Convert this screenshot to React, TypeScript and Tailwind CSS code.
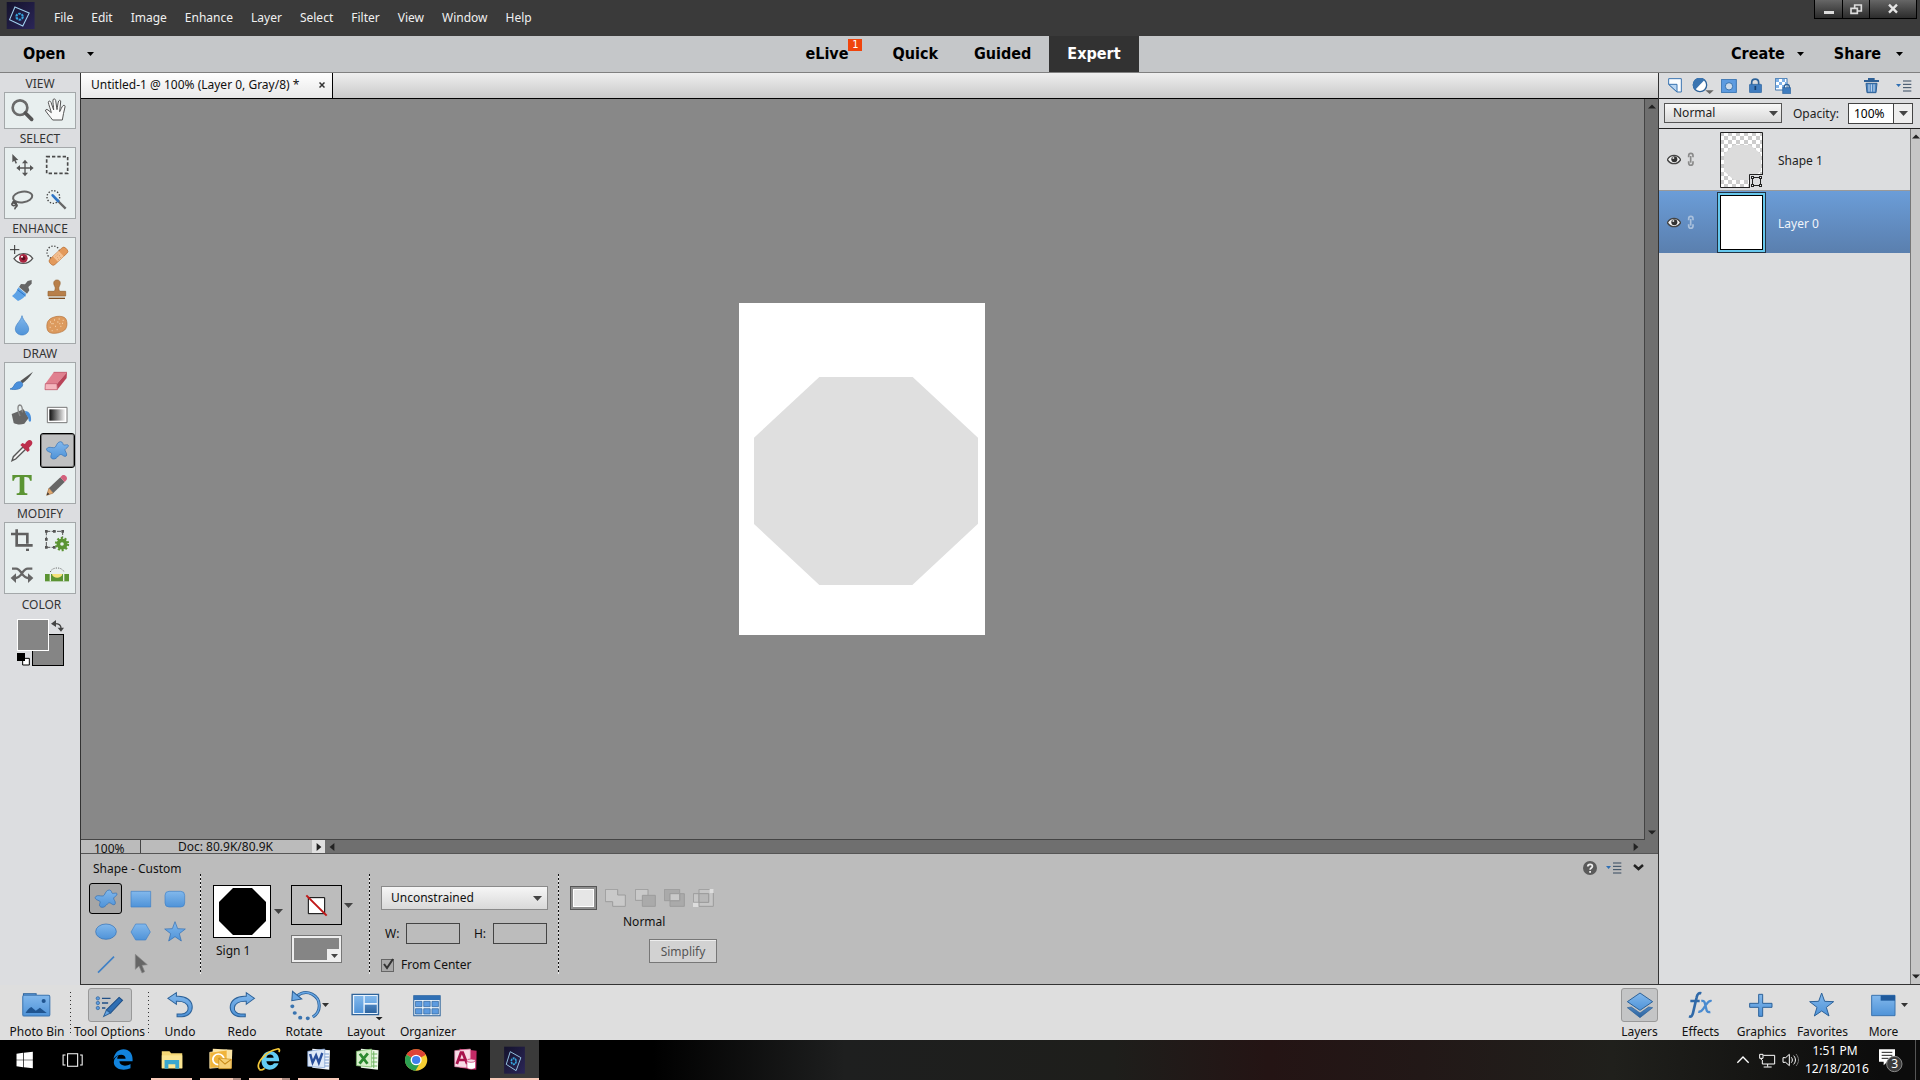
import React, { ReactNode } from "react";

type Box = [number, number, number, number];

/* Icons are drawn on a grid of three units per pixel; `w` overrides the drawn width. */
function Icon({ box, children, w, className = "" }: { box: Box; children: ReactNode; w?: number; className?: string }) {
  return (
    <svg
      viewBox={box.join(" ")}
      width={w ?? box[2] / 3}
      height={box[3] / 3}
      preserveAspectRatio="none"
      className={`block shrink-0 ${className}`}
      aria-hidden="true"
    >
      {children}
    </svg>
  );
}

function Caret({ className = "text-[#444]" }: { className?: string }) {
  return (
    <svg viewBox="0 0 9 5" className={`block h-[5px] w-[9px] shrink-0 ${className}`} aria-hidden="true">
      <path d="M0 0h9L4.500 5z" fill="currentColor" />
    </svg>
  );
}

function SmallCaret({ className = "text-black" }: { className?: string }) {
  return (
    <svg viewBox="0 0 7 4" className={`block h-1 w-[7px] shrink-0 ${className}`} aria-hidden="true">
      <path d="M0 0h7L3.500 4z" fill="currentColor" />
    </svg>
  );
}

function Gradients() {
  return (
    <svg className="absolute h-0 w-0" aria-hidden="true">
      <defs>
        <linearGradient id="blue" x1="0" y1="0" x2="0" y2="1">
          <stop offset="0" stopColor="#82b8ec" />
          <stop offset="1" stopColor="#4f93d8" />
        </linearGradient>
        <linearGradient id="navy" x1="0" y1="0" x2="0" y2="1">
          <stop offset="0" stopColor="#4a83bf" />
          <stop offset="1" stopColor="#2c639f" />
        </linearGradient>
        <linearGradient id="fade" x1="0" y1="0" x2="1" y2="0">
          <stop offset="0" stopColor="#111" />
          <stop offset="1" stopColor="#f4f4f4" />
        </linearGradient>
        <linearGradient id="logo" x1="0" y1="0" x2="1" y2="1">
          <stop offset="0" stopColor="#14122c" />
          <stop offset="1" stopColor="#2b2658" />
        </linearGradient>
      </defs>
    </svg>
  );
}

function Logo() {
  return (
    <>
      <rect x="20" y="9" width="78" height="81" fill="url(#logo)" />
      <path d="M43 24 83 42 65 81 28 62z" fill="none" stroke="#9fd0ee" strokeWidth="3" />
      <circle cx="56" cy="53" r="9" fill="none" stroke="#36a5de" strokeWidth="6" strokeDasharray="7 2.400" />
    </>
  );
}

const splat =
  "M168 318c3-6 6-13 14-13c8 1 6 9 9 10c5 1 12-3 14 1c2 6-8 8-10 13c-1 5 6 9 5 16c-1 6-7 5-12 1c-5-4-8-3-12 1c-5 5-9 11-16 10c-8-1-9-7-6-13c2-5-1-6-6-8c-8-3-11-8-6-12c5-4 12-1 18-1c4 0 6-1 8-5z";

const menus = ["File", "Edit", "Image", "Enhance", "Layer", "Select", "Filter", "View", "Window", "Help"];

function MenuBar() {
  return (
    <header className="flex h-9 items-start justify-between bg-[#3a3a3a] text-[#f0f0f0]">
      <div className="flex h-9 items-center">
        <Icon box={[18, 9, 84, 84]} w={30} className="ml-[6px] -mt-1">
          <Logo />
        </Icon>
        <nav className="ml-[18px] flex gap-[18px]">
          {menus.map((m) => (
            <button key={m} className="leading-4">
              {m}
            </button>
          ))}
        </nav>
      </div>
      <div className="mr-[3px] flex h-[19px] border border-t-0 border-black bg-linear-to-b from-[#666] to-[#2c2c2c]">
        <button aria-label="Minimize" className="grid w-7 place-items-center border-r border-black">
          <Icon box={[600, 3, 48, 48]}>
            <rect x="609" y="33" width="30" height="9" fill="#ddd" />
          </Icon>
        </button>
        <button aria-label="Restore" className="grid w-[27px] place-items-center border-r border-black">
          <Icon box={[684, 6, 48, 48]}>
            <path d="M704 18h20v18h-20z" fill="none" stroke="#ddd" strokeWidth="5" />
            <path d="M693 28h19v15h-19z" fill="#444" stroke="#ddd" strokeWidth="5" />
          </Icon>
        </button>
        <button aria-label="Close" className="grid w-[46px] place-items-center">
          <Icon box={[795, 6, 48, 48]}>
            <path d="m807 17 24 24m0-24-24 24" stroke="#e4e4e4" strokeWidth="7" />
          </Icon>
        </button>
      </div>
    </header>
  );
}

function ModeBar() {
  return (
    <div className="grid h-[37px] grid-cols-[1fr_auto_1fr] border-b border-[#808080] bg-[#c5c7c9] font-['DejaVu_Sans_Condensed','Noto_Sans',sans-serif] text-[16px] font-bold text-black">
      <button className="flex items-center justify-self-start pl-[23px]">
        Open <SmallCaret className="ml-[21px] text-black" />
      </button>
      <nav className="flex pl-[6px]">
        <button className="relative pr-[26px] pl-[18px]">
          eLive
          <span className="absolute top-[3px] right-[12px] h-3 w-[14px] bg-[#f0440c] text-center text-[11px] leading-3 font-normal text-white">
            1
          </span>
        </button>
        <button className="px-[18px]">Quick</button>
        <button className="px-[18px]">Guided</button>
        <button className="bg-[#323232] px-[18px] text-white">Expert</button>
      </nav>
      <div className="flex items-center justify-self-end pr-[17px]">
        <button className="flex items-center">
          Create <SmallCaret className="ml-3 text-black" />
        </button>
        <button className="ml-[30px] flex items-center">
          Share <SmallCaret className="ml-[15px] text-black" />
        </button>
      </div>
    </div>
  );
}

type Tool = { name: string; box: Box; art: ReactNode; active?: boolean };

const groups: { title: string; tools: Tool[] }[] = [
  {
    title: "VIEW",
    tools: [
      {
        name: "Zoom",
        box: [15, 69, 105, 105],
        art: (
          <>
            <circle cx="60" cy="113" r="22" fill="#e6eeee" stroke="#6a6a6a" strokeWidth="8" />
            <path d="m76 129 19 19" stroke="#555" strokeWidth="11" strokeLinecap="round" />
          </>
        ),
      },
      {
        name: "Hand",
        box: [120, 69, 105, 105],
        art: (
          <path
            d="M158 150c-8-10-16-20-21-27c-2-5 3-6 7-3l10 8c-2-10-8-23-9-31c0-5 6-5 8 0l8 23c0-10-3-22-2-30c1-5 7-4 8 1l4 28c2-9 2-19 5-26c3-4 7-2 6 3l-3 29c4-7 6-14 10-18c4-3 7 0 6 4c-4 12-5 26-8 39z"
            fill="#fafafa"
            stroke="#555"
            strokeWidth="3"
            strokeLinejoin="round"
          />
        ),
      },
    ],
  },
  {
    title: "SELECT",
    tools: [
      {
        name: "Move",
        box: [15, 234, 105, 105],
        art: (
          <>
            <path d="M37 252v25l6-5 4 9 4-2-4-8 8-1z" fill="#555" />
            <path d="M75 276v36M57 294h36" stroke="#555" strokeWidth="4" />
            <path d="m75 269 9 11H66zM75 319l-9-11h18zM49 294l11-9v18zM101 294l-11 9v-18z" fill="#555" />
          </>
        ),
      },
      {
        name: "Marquee",
        box: [120, 234, 105, 105],
        art: (
          <rect x="140" y="260" width="63" height="50" fill="none" stroke="#4a4a4a" strokeWidth="5" strokeDasharray="10 6" />
        ),
      },
      {
        name: "Lasso",
        box: [15, 339, 105, 105],
        art: (
          <>
            <ellipse cx="68" cy="381" rx="29" ry="16" fill="none" stroke="#666" strokeWidth="6" transform="rotate(-8 68 381)" />
            <path d="M37 398c5-6 14-1 11 5s-14 5-12-2c3-6 20 2 14 8-5 5-6 3-5 9" fill="none" stroke="#555" strokeWidth="5" />
          </>
        ),
      },
      {
        name: "Quick Selection",
        box: [120, 339, 105, 105],
        art: (
          <>
            <circle cx="160" cy="381" r="19" fill="none" stroke="#444" strokeWidth="4" strokeDasharray="4 5" />
            <path d="m174 393 23 23" stroke="#666" strokeWidth="7" />
            <path d="m158 376 16 17" stroke="#2f74c4" strokeWidth="8" strokeLinecap="round" />
          </>
        ),
      },
    ],
  },
  {
    title: "ENHANCE",
    tools: [
      {
        name: "Red Eye",
        box: [15, 504, 105, 105],
        art: (
          <>
            <path d="M30 539h28M44 525v27" stroke="#333" strokeWidth="3" />
            <path d="M42 566c14-20 42-20 56-1c-14 20-42 20-56 1z" fill="#fafafa" stroke="#555" strokeWidth="4" />
            <circle cx="70" cy="565" r="13" fill="#a8243f" />
            <circle cx="70" cy="565" r="6" fill="#5d0e20" />
            <circle cx="66" cy="560" r="3" fill="#fff" />
          </>
        ),
      },
      {
        name: "Spot Healing",
        box: [120, 504, 105, 105],
        art: (
          <>
            <circle cx="160" cy="547" r="19" fill="none" stroke="#444" strokeWidth="4" strokeDasharray="4 5" />
            <g transform="rotate(-43 175 559)">
              <rect x="143" y="548" width="65" height="22" rx="8" fill="#e39a5c" stroke="#b86f35" strokeWidth="2" />
              <rect x="163" y="548" width="24" height="22" fill="#f4c091" />
              <path d="M169 554h2m6 0h2m-10 6h2m6 0h2m-10 6h2m6 0h2" stroke="#a86a38" strokeWidth="2" />
            </g>
          </>
        ),
      },
      {
        name: "Smart Brush",
        box: [15, 609, 105, 105],
        art: (
          <>
            <path d="m95 630-12 3-8 10-12-1-6 9 24 20 7-10-3-10 10-10z" fill="#666" />
            <path d="m55 652 24 20c-6 11-14 17-25 21l-18-15c9-6 14-13 19-26z" fill="#5da2e6" />
            <path d="m52 659 25 19" stroke="#2f74c4" strokeWidth="3" />
          </>
        ),
      },
      {
        name: "Clone Stamp",
        box: [120, 609, 105, 105],
        art: (
          <>
            <path
              d="M171 630c12 0 11 13 7 18c-3 6-2 13 2 16h17v14h-53v-14h18c4-3 5-10 2-16c-4-5-5-18 7-18z"
              fill="#b87f49"
              stroke="#94602f"
              strokeWidth="2"
            />
            <path d="M146 685h49" stroke="#7d4e22" strokeWidth="4" />
          </>
        ),
      },
      {
        name: "Blur",
        box: [15, 714, 105, 105],
        art: (
          <path
            d="M66 737c4 17 20 26 20 40c0 11-9 18-20 18s-20-7-20-18c0-14 16-23 20-40z"
            fill="url(#blue)"
            stroke="#3f81c6"
            strokeWidth="2"
          />
        ),
      },
      {
        name: "Sponge",
        box: [120, 714, 105, 105],
        art: (
          <>
            <path
              d="M145 752c10-14 43-18 52-6c6 10 5 27-3 34c-9 8-34 14-46 7c-10-6-9-28-3-35z"
              fill="#dc9a5e"
              stroke="#b3713a"
              strokeWidth="2"
            />
            <path
              d="M150 756h3m9-6h3m11-3h3m9 4h3m-33 10h3m11-5h3m11 4h3m-40 12h3m13-3h3m13 0h3m-29 13h3m12-3h3m-19-18h3m21 0h3"
              stroke="#f3cda4"
              strokeWidth="4"
            />
          </>
        ),
      },
    ],
  },
  {
    title: "DRAW",
    tools: [
      {
        name: "Brush",
        box: [15, 69, 105, 105],
        art: (
          <>
            <path d="m99 95-38 28 7 7c10-8 24-22 31-35z" fill="#555" />
            <path
              d="M58 125c8 0 12 6 9 13c-7 12-25 12-37 9c10-3 10-8 14-14c4-6 9-8 14-8z"
              fill="#4a90dc"
              stroke="#2d6cb4"
              strokeWidth="2"
            />
          </>
        ),
      },
      {
        name: "Eraser",
        box: [120, 69, 105, 105],
        art: (
          <>
            <path d="m161 97 40 0-30 34-35 0z" fill="#e0808f" />
            <path d="m201 97-1 17-28 35-1-18z" fill="#b94459" />
            <path d="M136 131h35l1 18h-37z" fill="#f4b6be" stroke="#b94459" strokeWidth="2" />
            <path d="m161 97 40 0" stroke="#b94459" strokeWidth="2" />
          </>
        ),
      },
      {
        name: "Paint Bucket",
        box: [15, 174, 105, 105],
        art: (
          <>
            <path d="m35 222 36-14 15 26-13 17c-12 4-22 3-32-2z" fill="#666" />
            <path d="M60 228c-8-17-8-32-1-33c6 0 9 8 8 22" fill="none" stroke="#888" strokeWidth="4" />
            <path d="M75 213c14 0 20 15 18 29c-1 5-7 4-7-1c0-7-3-13-8-17z" fill="#4a90dc" />
          </>
        ),
      },
      {
        name: "Gradient",
        box: [120, 174, 105, 105],
        art: (
          <>
            <path d="M142 202h59v46h-59z" fill="#fff" stroke="#777" strokeWidth="3" />
            <path d="M148 208h47v34h-47z" fill="url(#fade)" />
          </>
        ),
      },
      {
        name: "Color Picker",
        box: [15, 279, 105, 105],
        art: (
          <>
            <path d="m69 321-29 29-4 12 11-5 30-29z" fill="#f2f2f2" stroke="#555" strokeWidth="4" />
            <path d="m61 315 6-6 8 3c4-9 14-16 20-9c6 8-2 15-8 20l2 8-6 5z" fill="#bd2f4c" />
          </>
        ),
      },
      {
        name: "Custom Shape",
        box: [120, 279, 105, 105],
        active: true,
        art: <path d={splat} fill="url(#blue)" stroke="#2d6cb4" strokeWidth="2" />,
      },
      {
        name: "Type",
        box: [15, 384, 105, 105],
        art: (
          <path
            d="M37 405h58v17h-5c-1-8-5-11-14-11h-3v43c0 5 3 6 9 6v5H50v-5c6 0 9-1 9-6v-43h-3c-9 0-13 3-14 11h-5z"
            fill="#5b9433"
          />
        ),
      },
      {
        name: "Pencil",
        box: [120, 384, 105, 105],
        art: (
          <>
            <path d="m140 466 7-22 13 15z" fill="#e0a870" stroke="#a5703c" strokeWidth="2" />
            <path d="m147 444 34-32 13 14-34 33z" fill="#666" />
            <path d="m181 412 6-6c8-4 17 6 13 13l-6 7z" fill="#d4607c" />
            <path d="m140 466 3-9 5 6z" fill="#333" />
          </>
        ),
      },
    ],
  },
  {
    title: "MODIFY",
    tools: [
      {
        name: "Crop",
        box: [15, 549, 105, 105],
        art: (
          <>
            <path d="M33 582h49v29M50 568v48h48" fill="none" stroke="#606060" strokeWidth="8" />
            <path d="M78 626h9v7h-9z" fill="#606060" />
          </>
        ),
      },
      {
        name: "Recompose",
        box: [120, 549, 105, 105],
        art: (
          <>
            <path d="M139 574h49v20M139 574v48h22" fill="none" stroke="#555" strokeWidth="3" strokeDasharray="12 4" />
            <path d="M135 570h8v8h-8zm24 0h8v8h-8zm25 0h8v8h-8zm-49 24h8v8h-8zm0 24h8v8h-8zm24 0h8v8h-8z" fill="#555" />
            <circle cx="186" cy="612" r="18" fill="none" stroke="#5b9433" strokeWidth="7" strokeDasharray="6 5.300" />
            <circle cx="186" cy="612" r="11" fill="none" stroke="#5b9433" strokeWidth="11" />
          </>
        ),
      },
      {
        name: "Content-Aware Move",
        box: [15, 654, 105, 105],
        art: (
          <>
            <path d="M36 686h12c16 0 18 28 36 28h5M40 714h7c18 0 20-28 36-28h14" fill="none" stroke="#666" strokeWidth="7" />
            <path d="m84 700 16 14-16 15zM48 700l-16 14 16 15z" fill="#666" />
          </>
        ),
      },
      {
        name: "Straighten",
        box: [120, 654, 105, 105],
        art: (
          <>
            <path d="M151 696c5-16 36-16 41 0" fill="none" stroke="#555" strokeWidth="3" strokeDasharray="3 4" />
            <path d="M135 702h72v22h-72z" fill="#5b9433" />
            <path d="M151 702v22m40-22v22" stroke="#e8f0e8" strokeWidth="4" />
            <path d="M156 702h31c-2 15-29 15-31 0z" fill="#f5e27a" />
          </>
        ),
      },
    ],
  },
];

function Toolbox() {
  return (
    <aside className="flex w-[81px] shrink-0 flex-col border-r border-[#333] bg-[#dcdde0] pt-px text-[#333]">
      {groups.map((g) => (
        <section key={g.title} className="flex flex-col">
          <h2 className="h-[18px] text-center leading-5">{g.title}</h2>
          <div className="ml-1 grid w-18 grid-cols-2 border border-[#a4a8aa] bg-[#e8efef]">
            {g.tools.map((t) => (
              <button
                key={t.name}
                aria-label={t.name}
                className={
                  t.active
                    ? "flex h-[35px] items-center justify-center overflow-hidden rounded-[3px] border border-black bg-[#bfc0c1] ring-1 ring-[#777] ring-inset"
                    : "grid h-[35px] place-items-center"
                }
              >
                <Icon box={t.box}>{t.art}</Icon>
              </button>
            ))}
          </div>
        </section>
      ))}
      <h2 className="h-[22px] pl-[3px] text-center leading-[22px]">COLOR</h2>
      <div className="relative mt-[3px] ml-[17px] h-12 w-12">
        <button aria-label="Background color" className="absolute top-[15px] left-[15px] h-8 w-8 border border-black bg-[#858585]" />
        <button aria-label="Foreground color" className="absolute top-0 left-0 h-8 w-8 border border-white bg-[#858585]" />
        <button aria-label="Switch colors" className="absolute top-0 right-0">
          <Icon box={[150, 837, 45, 42]}>
            <path d="M165 851c10 0 18 5 18 14" fill="none" stroke="#444" strokeWidth="4" />
            <path d="m168 840-15 11 15 10zM173 863h19l-9 12z" fill="#444" />
          </Icon>
        </button>
        <button aria-label="Default colors" className="absolute bottom-px left-0">
          <Icon box={[51, 939, 39, 39]}>
            <path d="M68 955h20v20h-20z" fill="#fff" stroke="#000" strokeWidth="3" />
            <path d="M51 939h24v24h-24z" />
          </Icon>
        </button>
      </div>
    </aside>
  );
}

function Triangle({ dir, className = "text-[#222]" }: { dir: "up" | "down" | "left" | "right"; className?: string }) {
  const d = { up: "M0 7 5 2 10 7z", down: "M0 3 5 8 10 3z", left: "M8 0 2 5 8 10z", right: "M2 0 8 5 2 10z" }[dir];
  return (
    <svg viewBox="0 0 10 10" className={`block h-2 w-2 shrink-0 ${className}`} aria-hidden="true">
      <path d={d} fill="currentColor" />
    </svg>
  );
}

function Workspace() {
  return (
    <main className="flex min-w-0 flex-1 flex-col">
      <div className="flex h-[26px] border-b border-black bg-linear-to-b from-[#efefef] to-[#c9c9c9]">
        <div className="flex items-center border-r border-black bg-linear-to-b from-white to-[#e8e8e8] pr-[7px] pb-px pl-[10px] text-[#111]">
          <span>Untitled-1 @ 100% (Layer 0, Gray/8) *</span>
          <button aria-label="Close document" className="ml-5">
            <svg viewBox="0 0 6 6" className="block h-[6px] w-[6px]">
              <path d="m.5.5 5 5m0-5-5 5" stroke="#333" strokeWidth="1.500" />
            </svg>
          </button>
        </div>
      </div>
      <div className="flex flex-1">
        <div className="grid flex-1 place-items-center border-r border-b border-[#444] bg-[#888] pr-[2px]">
          <svg viewBox="27 39 738 996" className="block h-[332px] w-[246px] bg-white" role="img" aria-label="Octagon shape on a white page">
            <path d="M268 261h280L744 443v258L547 885H268L72 702V443z" fill="#dfdfdf" />
          </svg>
        </div>
        <div className="flex w-[13px] flex-col items-center justify-between bg-[#6f6f6f] py-1">
          <Triangle dir="up" />
          <Triangle dir="down" />
        </div>
      </div>
      <div className="flex h-[14px] border-b border-[#555] bg-[#bbb] leading-[14px] text-[#111]">
        <span className="w-15 border-r border-[#444] pl-[13px] leading-[18px]">100%</span>
        <span className="w-[171px] pl-[37px]">Doc: 80.9K/80.9K</span>
        <button aria-label="Status options" className="grid w-[13px] place-items-center bg-[#e0e0e0]">
          <Triangle dir="right" />
        </button>
        <div className="flex flex-1 items-center justify-between bg-[#6f6f6f] pr-[18px] pl-[3px]">
          <Triangle dir="left" />
          <Triangle dir="right" />
        </div>
      </div>
      <ToolOptions />
    </main>
  );
}

const shapes: { name: string; art: ReactNode }[] = [
  {
    name: "Custom shape",
    art: <path d={splat} fill="url(#blue)" stroke="#2d6cb4" strokeWidth="2" transform="translate(-121 -281)" />,
  },
  { name: "Rectangle", art: <path d="M21 28h59v47H21z" fill="url(#blue)" stroke="#3f81c6" strokeWidth="2" /> },
  {
    name: "Rounded rectangle",
    art: <rect x="21" y="28" width="59" height="47" rx="12" fill="url(#blue)" stroke="#3f81c6" strokeWidth="2" />,
  },
  { name: "Ellipse", art: <ellipse cx="48" cy="50" rx="31" ry="23" fill="url(#blue)" stroke="#2d6cb4" strokeWidth="2" /> },
  { name: "Polygon", art: <path d="M35 27h30l14 24-14 24H35L21 51z" fill="url(#blue)" stroke="#3f81c6" strokeWidth="2" /> },
  {
    name: "Star",
    art: <path d="m51 20 8 21 23 1-18 14 6 22-19-13-19 13 6-22-18-14 23-1z" fill="url(#blue)" stroke="#2d6cb4" strokeWidth="2" />,
  },
  { name: "Line", art: <path d="m24 74 48-48" stroke="#3f81c6" strokeWidth="5" /> },
  { name: "Selection", art: <path d="M34 19v45l11-10 9 21 8-4-8-19 16-2z" fill="#666" stroke="#888" strokeWidth="2" /> },
];

const ops: { name: string; art: ReactNode }[] = [
  { name: "Add", art: <path d="M1 1h37v17h23v34H23V38H1z" fill="#c9c9c9" /> },
  {
    name: "Subtract",
    art: (
      <>
        <path d="M1 1h38v33H1z" fill="#c9c9c9" />
        <path d="M22 19h39v33H22z" fill="#aaa" />
      </>
    ),
  },
  {
    name: "Intersect",
    art: (
      <>
        <path d="M1 1h46v34H1zM18 14h43v38H18z" fill="#aaa" />
        <path d="M18 14h29v21H18z" fill="#c9c9c9" />
      </>
    ),
  },
  {
    name: "Exclude",
    art: (
      <>
        <path d="M1 14h46v26H1zM18 1h43v51H18z" fill="#c6c6c6" />
        <path d="M18 14h29v26H18z" fill="#b8b8b8" />
        <path d="M50 0h12v12H50zM0 41h16v13H0z" fill="#ddd" stroke="none" />
      </>
    ),
  },
];

function Divider() {
  return (
    <div className="mt-[20px] h-[100px] w-px bg-[repeating-linear-gradient(to_bottom,#111_0px,#111_2px,#eee_2px,#eee_4px)]" />
  );
}

function MenuIcon() {
  return (
    <Icon box={[0, 0, 48, 36]}>
      <path d="M0 12h15l-7 9z" fill="#2f6fb4" />
      <path d="M21 3h25M21 13h25M21 23h25M21 33h25" stroke="#34495e" strokeWidth="3" />
    </Icon>
  );
}

function ToolOptions() {
  return (
    <section className="flex h-[131px] border-b border-[#333] bg-[#bcbcbc] text-[#111]">
      <div className="flex w-[119px] shrink-0 flex-col pl-[7px]">
        <h2 className="pt-[7px] pl-[5px] leading-4">Shape - Custom</h2>
        <div className="mt-[5px] ml-px grid grid-cols-[34px_34px_34px]">
          {shapes.map((s, i) => (
            <button
              key={s.name}
              aria-label={s.name}
              className={
                i === 0
                  ? "my-px flex h-[31px] w-[33px] items-center justify-center overflow-hidden rounded-[3px] border border-black bg-[#a6a6a6]"
                  : "grid h-[33px] place-items-center"
              }
            >
              <Icon box={[0, 0, 99, 99]}>{s.art}</Icon>
            </button>
          ))}
        </div>
      </div>
      <Divider />
      <div className="flex pt-[31px] pl-3">
        <div>
          <div className="flex items-center">
            <button aria-label="Shape preset" className="flex h-[53px] w-[58px] items-center justify-center border border-black bg-white">
              <svg viewBox="0 0 47 47" className="block h-[47px] w-[47px]">
                <path d="M14 0h19l14 14v19L33 47H14L0 33V14z" />
              </svg>
            </button>
            <Caret className="ml-[3px] text-[#444]" />
          </div>
          <p className="mt-[5px] ml-[3px] leading-4">Sign 1</p>
        </div>
        <div className="ml-2">
          <div className="flex items-center">
            <button aria-label="Style" className="flex h-10 w-[51px] items-center justify-center border border-black">
              <Icon box={[705, 189, 69, 69]}>
                <path d="M715 200h49v48h-49z" fill="#fff" stroke="#000" strokeWidth="3" />
                <path d="m709 193 61 61" stroke="#c01818" strokeWidth="6" />
              </Icon>
            </button>
            <Caret className="ml-[2px] text-[#444]" />
          </div>
          <button
            aria-label="Fill color"
            className="mt-[10px] flex h-7 w-[51px] items-end justify-end border border-[#777] bg-[#858585] ring-2 ring-[#eee] ring-inset"
          >
            <span className="grid h-[13px] w-[14px] place-items-center bg-[#eee]">
              <SmallCaret className="text-[#444]" />
            </span>
          </button>
        </div>
      </div>
      <div className="ml-4 flex">
        <Divider />
      </div>
      <div className="ml-[11px] w-[167px] pt-8">
        <div className="relative">
          <select
            aria-label="Constraint"
            className="block h-6 w-full appearance-none border border-[#8a8a8a] bg-linear-to-b from-[#f6f6f6] to-[#d9d9d9] pl-[9px] leading-[22px]"
          >
            <option>Unconstrained</option>
            <option>Defined Proportions</option>
            <option>Defined Size</option>
            <option>Fixed Size</option>
          </select>
          <Caret className="pointer-events-none absolute top-[10px] right-[6px] text-[#444]" />
        </div>
        <div className="mt-[13px] flex items-center justify-between pr-px">
          <label className="flex items-center gap-[7px] pl-1">
            W:
            <input className="h-[21px] w-[54px] border border-[#444] bg-transparent px-1" />
          </label>
          <label className="flex items-center gap-[7px]">
            H:
            <input className="h-[21px] w-[54px] border border-[#444] bg-transparent px-1" />
          </label>
        </div>
        <label className="relative mt-3 flex items-center gap-[7px] leading-[18px]">
          <input
            type="checkbox"
            defaultChecked
            className="peer h-[13px] w-[13px] appearance-none border border-[#666] bg-[#a9a9a9]"
          />
          <svg viewBox="0 0 13 13" className="pointer-events-none absolute top-[2px] left-0 hidden h-[13px] w-[13px] peer-checked:block">
            <path d="m3 6 3 4 6-9" fill="none" stroke="#333" strokeWidth="2" />
          </svg>
          From Center
        </label>
      </div>
      <div className="ml-[10px] flex">
        <Divider />
      </div>
      <div className="ml-[11px] w-[147px] pt-8">
        <div className="flex h-6 w-36 items-center justify-between">
          <button aria-label="Normal" className="flex h-6 w-[27px] items-center justify-center border border-[#555] bg-[#8f8f8f]">
            <span className="h-[18px] w-[21px] border border-white bg-[#e6e6e6]" />
          </button>
          {ops.map((o) => (
            <button key={o.name} aria-label={o.name} disabled>
              <Icon box={[0, 0, 63, 54]}>
                <g stroke="#9c9c9c" strokeWidth="3">
                  {o.art}
                </g>
              </Icon>
            </button>
          ))}
        </div>
        <p className="mt-1 pl-[53px] leading-4">Normal</p>
        <button className="mt-[9px] ml-auto block h-6 w-[68px] border border-[#777] bg-[#d2d2d2] leading-[23px] text-[#555] shadow-[inset_0_1px_0_#eee]">
          Simplify
        </button>
      </div>
      <div className="ml-auto flex h-[27px] items-center pr-[14px]">
        <button aria-label="Help">
          <svg viewBox="0 0 14 14" className="block h-[14px] w-[14px]">
            <circle cx="7" cy="7" r="7" fill="#5a5a5a" />
            <path d="M4.800 5.600c0-3 4.600-3 4.600-.4 0 1.800-2.300 1.700-2.300 3.600M7.100 10v1.800" fill="none" stroke="#eee" strokeWidth="1.800" />
          </svg>
        </button>
        <button aria-label="Panel menu" className="ml-[9px]">
          <MenuIcon />
        </button>
        <button aria-label="Collapse" className="ml-[11px]">
          <svg viewBox="0 0 11 7" className="block h-[7px] w-[11px]">
            <path d="m1 1 4.500 4L10 1" fill="none" stroke="#222" strokeWidth="2.500" />
          </svg>
        </button>
      </div>
    </section>
  );
}

function EyeIcon() {
  return (
    <Icon box={[141, 465, 42, 33]}>
      <path d="M142 482c10-17 30-17 40 0c-10 16-30 16-40 0z" fill="#f4f4f4" stroke="#444" strokeWidth="4" />
      <circle cx="163" cy="481" r="9" fill="#333" />
      <circle cx="160" cy="477" r="3" fill="#ddd" />
    </Icon>
  );
}

function ChainIcon({ color }: { color: string }) {
  return (
    <Icon box={[201, 459, 24, 45]}>
      <g fill="none" stroke={color} strokeWidth="5">
        <path d="M206 475v-5c0-9 13-9 13 0v5M206 487v5c0 9 13 9 13 0v-5" />
        <path d="M212 471v20" />
      </g>
    </Icon>
  );
}

function LayersPanel() {
  return (
    <aside className="flex w-[262px] shrink-0 flex-col border-b border-l border-[#333] bg-[#dcdddf] text-[#222]">
      <div className="flex h-[26px] items-center border-b border-[#222] pr-[8px] pl-[9px]">
        <button aria-label="New layer">
          <Icon box={[144, 234, 42, 45]}>
            <path d="M146 236h38v40h-13l-25-23z" fill="#fbfdff" stroke="#3a74b0" strokeWidth="3" />
            <path d="M146 253h25v23z" fill="#b9d6f3" stroke="#3a74b0" strokeWidth="3" />
          </Icon>
        </button>
        <button aria-label="Adjustment layer" className="ml-[10px]">
          <Icon box={[216, 234, 66, 48]}>
            <circle cx="240" cy="255" r="20" fill="#fff" stroke="#2d6299" strokeWidth="4" />
            <path d="M254 239 225 270a21 21 0 1 1 29-31z" fill="#3a74b0" />
            <path d="M256 271h25l-12 11z" fill="#666" />
          </Icon>
        </button>
        <button aria-label="Layer mask" className="ml-[7px]">
          <Icon box={[303, 234, 48, 42]}>
            <path d="M304 235h45v40h-45z" fill="#5d9be0" stroke="#3a74b0" strokeWidth="3" />
            <circle cx="327" cy="256" r="11" fill="#cfdcea" stroke="#3a74b0" strokeWidth="3" />
          </Icon>
        </button>
        <button aria-label="Lock all" className="ml-3">
          <Icon box={[387, 234, 39, 45]}>
            <path d="M395 255v-7c0-14 21-14 21 0v7" fill="none" stroke="#2d6299" strokeWidth="5" />
            <rect x="388" y="253" width="37" height="25" rx="3" fill="#3f7cbf" stroke="#2d6299" strokeWidth="2" />
            <path d="M406 258v12" stroke="#173f6d" strokeWidth="5" />
          </Icon>
        </button>
        <button aria-label="Lock transparency" className="ml-[13px]">
          <Icon box={[465, 234, 48, 48]}>
            <path d="M466 235h35v35h-35z" fill="#fff" stroke="#3a74b0" strokeWidth="3" />
            <path d="M468 237h9v9h-9zm18 0h9v9h-9zm-9 9h9v9h-9zm-9 9h9v9h-9zm18 0h9v9h-9zm9-9h6v9h-6z" fill="#7fb2e8" />
            <path d="M493 264v-4c0-9 15-9 15 0v4" fill="none" stroke="#2d6299" strokeWidth="4" />
            <path d="M488 263h24v18h-24z" fill="#3f7cbf" stroke="#2d6299" strokeWidth="2" />
          </Icon>
        </button>
        <button aria-label="Delete layer" className="ml-auto">
          <Icon box={[732, 234, 45, 48]}>
            <path d="M732 243h45M744 237h20" stroke="#2d5f95" strokeWidth="6" />
            <path d="M738 250h33l-3 28h-27z" fill="#4a83bf" stroke="#2d5f95" strokeWidth="3" />
            <path d="M747 253v22m7-22v22m8-22v22" stroke="#cfe0f2" strokeWidth="3" />
          </Icon>
        </button>
        <button aria-label="Panel menu" className="ml-[17px]">
          <MenuIcon />
        </button>
      </div>
      <div className="flex h-[30px] items-start border-b border-[#222] pt-1 pr-[7px] pl-[5px]">
        <div className="relative w-[118px]">
          <select
            aria-label="Blend mode"
            className="block h-5 w-full appearance-none border border-[#555] bg-linear-to-b from-[#f8f8f8] to-[#d8d8d8] pl-2 leading-[18px]"
          >
            <option>Normal</option>
            <option>Dissolve</option>
            <option>Multiply</option>
            <option>Screen</option>
          </select>
          <Caret className="pointer-events-none absolute top-2 right-1 text-[#444]" />
        </div>
        <label htmlFor="opacity" className="ml-[11px] leading-[21px]">
          Opacity:
        </label>
        <div className="ml-auto flex h-[21px] border border-[#444]">
          <input id="opacity" defaultValue="100%" className="w-[45px] border-r border-[#444] bg-white pl-[5px] text-black" />
          <button aria-label="Opacity slider" className="grid w-[18px] place-items-center bg-[#eee]">
            <Caret />
          </button>
        </div>
      </div>
      <div className="flex flex-1">
        <ul className="flex-1">
          <li className="flex h-[62px] items-center border-b border-[#999] pl-2">
            <EyeIcon />
            <span className="ml-[6px]">
              <ChainIcon color="#8a8a8a" />
            </span>
            <span className="ml-[25px]">
              <svg viewBox="0 0 43 56" className="block h-14 w-[43px]">
                <defs>
                  <pattern id="checks" width="8" height="8" patternUnits="userSpaceOnUse">
                    <path d="M0 0h8v8H0z" fill="#fff" />
                    <path d="M0 0h4v4H0zM4 4h4v4H4z" fill="#ccc" />
                  </pattern>
                </defs>
                <path d="M.5.5h42v55h-42z" fill="url(#checks)" stroke="#222" />
                <path d="M14 13h16l11 9v17l-11 9H14L4 39V22z" fill="#dcdcdc" />
                <path d="M29 42h14v14H29z" fill="#dcdddf" />
                <path d="M29.500 56V42.500H43" fill="none" stroke="#222" />
                <path d="M32.500 45.500h8v8h-8z" fill="none" stroke="#222" />
                <path d="M31 44h3v3h-3zm8 0h3v3h-3zm-8 8h3v3h-3zm8 0h3v3h-3z" fill="#222" />
                <path d="M32 45h1v1h-1zm8 0h1v1h-1zm-8 8h1v1h-1zm8 0h1v1h-1z" fill="#eee" />
              </svg>
            </span>
            <span className="ml-[15px] pt-[3px]">Shape 1</span>
          </li>
          <li className="flex h-[62px] items-center bg-linear-to-b from-[#6b9dd8] to-[#5a7fae] pl-2 text-[#f0f4fa]">
            <EyeIcon />
            <span className="ml-[6px]">
              <ChainIcon color="#a9c0dc" />
            </span>
            <span className="ml-[22px] h-[61px] w-[49px] border border-[#234] bg-[#66c8ee] p-[2px]">
              <span className="block h-full border border-black bg-white" />
            </span>
            <span className="ml-3 pt-[3px]">Layer 0</span>
          </li>
        </ul>
        <div className="flex w-[10px] flex-col items-center justify-between border-l border-[#777] bg-[#c6c6c6] py-1">
          <Triangle dir="up" />
          <Triangle dir="down" />
        </div>
      </div>
    </aside>
  );
}

type Action = { name: string; box: Box; art: ReactNode; w?: number; caret?: boolean };

const leftActions: Action[] = [
  {
    name: "Undo",
    box: [468, 30, 108, 96],
    w: 37,
    art: (
      <path
        d="m485 58 25-17v11c60-4 58 62 15 61h-13v-8h13c26 0 30-40-15-38v9z"
        fill="url(#blue)"
        stroke="#2d6299"
        strokeWidth="3"
      />
    ),
  },
  {
    name: "Redo",
    box: [652, 30, 108, 96],
    w: 37,
    art: (
      <path
        d="m741 58-24-17v11c-60-4-59 62-16 61h13v-8h-13c-26 0-29-40 16-38v9z"
        fill="url(#blue)"
        stroke="#2d6299"
        strokeWidth="3"
      />
    ),
  },
  {
    name: "Rotate",
    box: [829, 30, 108, 96],
    w: 37,
    caret: true,
    art: (
      <>
        <path d="M861 51c30-25 66 0 65 30c0 14-8 26-19 33" fill="none" stroke="#2d6299" strokeWidth="9" />
        <path d="M861 51c30-25 66 0 65 30c0 14-8 26-19 33" fill="none" stroke="#69a7e4" strokeWidth="4" />
        <path d="m848 37-2 28 29-5z" fill="#69a7e4" stroke="#2d6299" strokeWidth="3" />
        <path d="M847 82h1m6 20h1m15 14h1m21 2h1" stroke="#3a74b0" strokeWidth="11" strokeLinecap="round" />
      </>
    ),
  },
  {
    name: "Layout",
    box: [1011, 30, 108, 96],
    w: 37,
    art: (
      <>
        <path d="M1023 46h77v61h-77z" fill="#eaf3fc" stroke="#2d6299" strokeWidth="4" />
        <path d="M1029 51h27v51h-27zM1060 51h35v21h-35z" fill="url(#blue)" />
        <path d="M1060 77h35v25h-35z" fill="url(#navy)" />
        <path d="M1092 114h20l-10 10z" fill="#222" />
      </>
    ),
  },
  {
    name: "Organizer",
    box: [1189, 30, 108, 96],
    w: 37,
    art: (
      <>
        <path d="M1200 50h77v60h-77z" fill="#eaf3fc" stroke="#2d6299" strokeWidth="3" />
        <path d="M1200 50h77v13h-77z" fill="#2f6fb4" />
        <path
          d="M1205 67h19v16h-19zm24 0h19v16h-19zm24 0h19v16h-19zM1205 89h19v16h-19zm24 0h19v16h-19zm24 0h19v16h-19z"
          fill="#5d9be0"
          stroke="#2d6299"
          strokeWidth="2"
        />
      </>
    ),
  },
];

const photoBin: Action = {
  name: "Photo Bin",
  box: [54, 30, 108, 96],
  w: 37,
  art: (
    <>
      <path d="M67 48v-4h37v4" fill="#5d9be0" stroke="#2d6299" strokeWidth="3" />
      <rect x="65" y="49" width="79" height="62" rx="4" fill="url(#blue)" stroke="#3a74b0" strokeWidth="3" />
      <path d="M73 102c4-7 10-15 17-18l13 11 12-9 20 16z" fill="#1f5490" />
      <circle cx="126" cy="66" r="6" fill="#1f5490" />
    </>
  ),
};

const toolOptions: Action = {
  name: "Tool Options",
  box: [261, 27, 108, 96],
  w: 37,
  art: (
    <>
      <path d="M293 55h25m-25 14h18m-18 15h10" stroke="#1f4f86" strokeWidth="4" />
      <circle cx="281" cy="55" r="5" fill="#5d9be0" stroke="#2d6299" strokeWidth="2" />
      <circle cx="281" cy="69" r="5" fill="#5d9be0" stroke="#2d6299" strokeWidth="2" />
      <circle cx="281" cy="84" r="5" fill="#5d9be0" stroke="#2d6299" strokeWidth="2" />
      <path d="m343 52 10 9-35 38-12-9z" fill="#2f6fb4" stroke="#1f4f86" strokeWidth="3" />
      <path d="m306 90 12 9-20 10z" fill="#69a7e4" stroke="#2d6299" strokeWidth="3" />
    </>
  ),
};

const layers: Action = {
  name: "Layers",
  box: [180, 27, 108, 96],
  art: (
    <>
      <path d="m196 83 12-2 26 18 26-18 12 2-38 30z" fill="url(#navy)" stroke="#2d6299" strokeWidth="2" />
      <path d="m234 39 38 26-38 26-38-26z" fill="url(#blue)" stroke="#2d6299" strokeWidth="3" />
    </>
  ),
};

const rightActions: Action[] = [
  {
    name: "Effects",
    box: [369, 30, 108, 96],
    art: (
      <>
        <path d="M387 112c7 3 10-2 12-10l11-47c2-11 7-14 14-12M391 66h28" fill="none" stroke="#2f69a8" strokeWidth="8" />
        <path
          d="M424 66c12-3 10 8 14 20c2 10 3 15 13 13M455 66c-10-3-14 8-21 17c-7 9-9 18-19 15"
          fill="none"
          stroke="#4a8bd0"
          strokeWidth="7"
        />
      </>
    ),
  },
  {
    name: "Graphics",
    box: [551, 30, 108, 96],
    art: <path d="M595 46h12v27h28v12h-28v27h-12V85h-27V73h27z" fill="url(#blue)" stroke="#2d6299" strokeWidth="3" />,
  },
  {
    name: "Favorites",
    box: [735, 30, 108, 96],
    art: (
      <path
        d="m785 42 9 25 27 1-22 17 8 26-22-15-22 15 8-26-22-17 27-1z"
        fill="url(#blue)"
        stroke="#2d6299"
        strokeWidth="3"
      />
    ),
  },
  {
    name: "More",
    box: [917, 30, 108, 96],
    caret: true,
    art: (
      <>
        <path d="M934 49h70v61h-70z" fill="url(#blue)" stroke="#3a74b0" strokeWidth="3" />
        <path d="M961 49h43v16h-43z" fill="#1f5a9c" />
      </>
    ),
  },
];

function ActionButton({ action, className, frame }: { action: Action; className: string; frame?: string }) {
  return (
    <button className={`flex h-full flex-col items-center pt-[3px] leading-4 whitespace-nowrap text-[#111] ${className}`}>
      <span
        className={
          frame
            ? `relative flex h-9 items-center justify-center overflow-hidden rounded-[3px] border border-[#999] bg-[#c4c5c6] ${frame}`
            : "relative grid h-9 place-items-center"
        }
      >
        <Icon box={action.box} w={action.w}>
          {action.art}
        </Icon>
        {action.caret && <SmallCaret className="absolute top-[15px] -right-[6px] text-[#333]" />}
      </span>
      <span className="mt-[2px]">{action.name}</span>
    </button>
  );
}

function ActionBar() {
  const dots =
    "mt-[7px] h-[42px] w-px bg-[repeating-linear-gradient(to_bottom,#333_0px,#333_1px,transparent_1px,transparent_4px)]";
  return (
    <footer className="flex h-[55px] bg-[#dedede]">
      <ActionButton action={photoBin} className="ml-1 w-[66px]" />
      <div className={dots} />
      <ActionButton action={toolOptions} className="w-[77px]" frame="w-11" />
      <div className={dots} />
      {leftActions.map((a) => (
        <ActionButton key={a.name} action={a} className="w-[62px]" />
      ))}
      <div className="ml-auto flex pr-[6px]">
        <ActionButton action={layers} className="w-[61px]" frame="w-[37px]" />
        {rightActions.map((a) => (
          <ActionButton key={a.name} action={a} className="w-[61px]" />
        ))}
      </div>
    </footer>
  );
}

const apps: { name: string; box: Box; art: ReactNode; state?: "open" | "multi" | "active" }[] = [
  {
    name: "Start",
    box: [33, 204, 72, 72],
    art: <path d="m46 221 19-3v21H46zm21-3 26-3v24H67zM46 241h19v21l-19-3zm21 0h26v24l-26-3z" fill="#fff" />,
  },
  {
    name: "Task View",
    box: [176, 204, 72, 72],
    art: <path d="M195 221h29v38h-29zM189 225h-7v30h7m42-30h6v30h-6" fill="none" stroke="#fff" strokeWidth="3" />,
  },
  {
    name: "Edge",
    box: [321, 204, 72, 72],
    art: (
      <path
        d="M331 237c3-18 14-29 29-29c16 0 26 13 26 29v7h-38c1 14 19 17 32 8v13c-19 9-48 4-48-18c0-10 6-17 14-21c-3 4-4 7-4 10h24c0-17-26-14-35 1z"
        fill="#1283dc"
      />
    ),
  },
  {
    name: "File Explorer",
    box: [462, 204, 72, 72],
    state: "open",
    art: (
      <>
        <path d="M470 214h22l5 6h32v45h-59z" fill="#f5d775" />
        <path d="M470 226h59v39h-59z" fill="#fbe592" />
        <path d="M478 266v-26h42v26h-11v-13h-20v13z" fill="#3aa7d0" />
      </>
    ),
  },
  {
    name: "Outlook",
    box: [603, 204, 72, 72],
    state: "multi",
    art: (
      <>
        <path d="m617 206 56 3-2 55-58-4z" fill="#fbe3a3" />
        <path d="m608 217 50-7v50l-50 5z" fill="#f0b43c" stroke="#fff0c0" strokeWidth="2" />
        <circle cx="633" cy="238" r="16" fill="none" stroke="#fff" strokeWidth="5" />
        <path d="m634 234 36 4v28h-36z" fill="#f7cf73" stroke="#c88a18" strokeWidth="2" />
        <path d="m634 235 18 17 18-14" fill="none" stroke="#c88a18" strokeWidth="3" />
      </>
    ),
  },
  {
    name: "Internet Explorer",
    box: [750, 204, 72, 72],
    state: "multi",
    art: (
      <>
        <path d="M814 244h-37c2 15 17 14 22 6h13c-9 27-50 26-49-8c1-37 51-38 51 2zm-37-11h21c-1-13-19-13-21 0z" fill="#63cdf4" />
        <path d="M757 268c-12-16 16-54 52-61c6-1 7 4 4 9M757 268c4 4 10 1 15-3" fill="none" stroke="#f5c93a" strokeWidth="5" />
      </>
    ),
  },
  {
    name: "Word",
    box: [888, 204, 72, 72],
    state: "open",
    art: (
      <>
        <path d="m906 206 51 5-2 58-49-6z" fill="#f2f6fc" />
        <path d="M920 222h34m-34 9h34m-34 9h34m-34 9h34m-34 9h34" stroke="#7b9cd0" strokeWidth="3" />
        <path d="m893 214 49-7v56l-49-4z" fill="#dfe9f8" stroke="#7b9cd0" strokeWidth="2" />
        <path d="m900 222 7 26 10-22 8 22 10-29" fill="none" stroke="#2a4f9c" strokeWidth="7" />
      </>
    ),
  },
  {
    name: "Excel",
    box: [1032, 204, 72, 72],
    art: (
      <>
        <path d="m1049 206 51 5-2 58-49-6z" fill="#eef8ea" />
        <path d="M1062 222h34m-34 12h34m-34 12h34m-34 12h34M1086 214v50" stroke="#6fb560" strokeWidth="3" />
        <path d="m1036 214 44-7v54l-44-4z" fill="#d8f0cc" stroke="#6fb560" strokeWidth="2" />
        <path d="m1046 221 22 30m1-31-24 31" stroke="#2c8a30" strokeWidth="8" />
      </>
    ),
  },
  {
    name: "Chrome",
    box: [1176, 204, 72, 72],
    art: (
      <>
        <circle cx="1211" cy="240" r="32" fill="#f7cf32" />
        <path d="M1211 240 1183 224a32 32 0 0 1 56 0z" fill="#dd4436" />
        <path d="M1183 224a32 32 0 0 0 26 48l14-25-12-7z" fill="#2c9f52" />
        <circle cx="1211" cy="240" r="16" fill="#fff" />
        <circle cx="1211" cy="240" r="12" fill="#4080ee" />
      </>
    ),
  },
  {
    name: "Access",
    box: [1314, 204, 72, 72],
    art: (
      <>
        <path d="m1333 206 49 6-1 57-48-6z" fill="#c22a66" />
        <path d="m1319 212 45-5v57l-45-4z" fill="#f8dbe6" stroke="#e080a8" strokeWidth="2" />
        <path d="m1325 252 12-34h5l13 34m-25-12h20" fill="none" stroke="#a8124c" strokeWidth="8" />
        <path d="M1354 242v20c0 8 25 8 25 0v-20" fill="#fff" stroke="#c22a66" strokeWidth="2" />
        <ellipse cx="1366" cy="242" rx="12" ry="5" fill="#f6dbe6" stroke="#c22a66" strokeWidth="2" />
      </>
    ),
  },
  {
    name: "Photoshop Elements",
    box: [12, 4, 94, 90],
    state: "active",
    art: <Logo />,
  },
];

function Taskbar() {
  return (
    <footer className="flex h-10 justify-between bg-[linear-gradient(to_right,#000_0%,#000_34%,#1e1f1f_44%,#1e1e1b_58%,#241414_66%,#221817_74%,#20201c_84%,#0c0c0c_98%)] text-white">
      <nav className="flex bg-black">
        {apps.map((a) => (
          <button
            key={a.name}
            aria-label={a.name}
            className={
              a.state === "active"
                ? "relative flex w-[49px] items-center justify-center bg-[#3a3a3a]"
                : "relative flex w-[49px] items-center justify-center"
            }
          >
            <Icon box={a.box} w={25}>
              {a.art}
            </Icon>
            {a.state === "open" && <span className="absolute inset-x-1 bottom-0 h-[2px] bg-[#f8c9b8]" />}
            {a.state === "multi" && (
              <span className="absolute inset-x-1 bottom-0 h-[2px] border-r-8 border-[#b08e84] bg-[#f8c9b8]" />
            )}
            {a.state === "active" && <span className="absolute inset-x-0 bottom-0 h-[2px] bg-[#f8c9b8]" />}
          </button>
        ))}
      </nav>
      <div className="flex items-center">
        <button aria-label="Show hidden icons">
          <Icon box={[528, 225, 42, 30]}>
            <path d="m532 248 17-17 17 17" fill="none" stroke="#fff" strokeWidth="4" />
          </Icon>
        </button>
        <button aria-label="Network" className="ml-[9px]">
          <Icon box={[597, 219, 51, 45]}>
            <path d="M610 226h34v26h-37v-12M623 252v8M611 261h24" fill="none" stroke="#fff" strokeWidth="3" />
            <path d="M599 223h10v12h-10zM604 235v5" fill="none" stroke="#fff" strokeWidth="3" />
          </Icon>
        </button>
        <button aria-label="Volume" className="ml-[6px]">
          <Icon box={[666, 216, 54, 48]}>
            <path d="M669 233h8l11-10v34l-11-10h-8z" fill="none" stroke="#fff" strokeWidth="3" />
            <path d="M694 232c4 5 4 11 0 16M701 227c7 8 7 18 0 26" fill="none" stroke="#fff" strokeWidth="3" />
            <path d="M708 222c10 12 10 24 0 36" fill="none" stroke="#777" strokeWidth="3" />
          </Icon>
        </button>
        <button className="ml-[5px] w-15 text-center leading-[18px] whitespace-nowrap">
          1:51 PM
          <br />
          12/18/2016
        </button>
        <button aria-label="Notifications" className="relative ml-[14px]">
          <Icon box={[957, 210, 72, 78]}>
            <path d="M957 217h48v37h-23l-11 11v-11h-14z" fill="#fff" />
            <path d="M965 226h32m-32 9h32m-32 9h20" stroke="#222" strokeWidth="3" />
            <circle cx="1003" cy="261" r="23" fill="#3c3c3c" stroke="#888" strokeWidth="3" />
          </Icon>
          <span className="absolute right-[5px] bottom-[1px] leading-4">3</span>
        </button>
        <span className="mr-1 ml-3 h-10 w-px bg-[#555]" />
      </div>
    </footer>
  );
}

export default function App() {
  return (
    <div className="flex min-h-screen flex-col bg-[#dcdde0] font-['Noto_Sans','Open_Sans',sans-serif] text-[12px] leading-4">
      <Gradients />
      <MenuBar />
      <ModeBar />
      <div className="flex flex-1">
        <Toolbox />
        <Workspace />
        <LayersPanel />
      </div>
      <ActionBar />
      <Taskbar />
    </div>
  );
}
